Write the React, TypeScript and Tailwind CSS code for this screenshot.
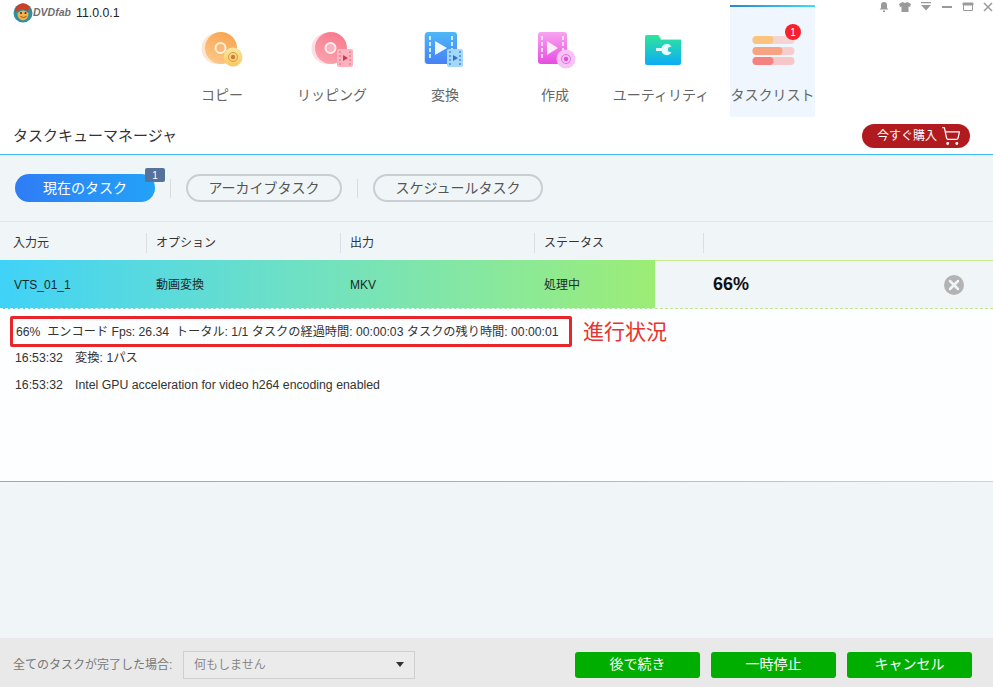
import React from "react";
import { ShoppingCart } from "lucide-react";

const FONT = { fontFamily: '"Liberation Sans", "Noto Sans CJK JP", sans-serif' };

function Film({ x, y, c, dot, tri }: { x: number; y: number; c: string; dot: string; tri: string }) {
  return (
    <g>
      <rect x={x} y={y} width="16" height="18" rx="2" fill={c} />
      {[3, 7, 11, 15].map((d) => (
        <g key={d}>
          <rect x={x + 2} y={y + d - 1} width="2" height="2" fill={dot} />
          <rect x={x + 12} y={y + d - 1} width="2" height="2" fill={dot} />
        </g>
      ))}
      <path d={`M${x + 6} ${y + 6}l5 3-5 3z`} fill={tri} />
    </g>
  );
}

function Copy() {
  return (
    <svg width="60" height="40" viewBox="0 0 60 40">
      <defs>
        <linearGradient id="c1" x1="0.7" y1="0" x2="0.2" y2="1">
          <stop offset="0" stopColor="#f9a54f" />
          <stop offset="1" stopColor="#fbc98a" />
        </linearGradient>
        <linearGradient id="c2" x1="0" y1="0" x2="0" y2="1">
          <stop offset="0" stopColor="#fbe6a0" />
          <stop offset="1" stopColor="#f9c860" />
        </linearGradient>
      </defs>
      <circle cx="25" cy="18.5" r="15.5" fill="#fde6d6" />
      <circle cx="29" cy="18" r="16" fill="url(#c1)" />
      <circle cx="28.500" cy="18" r="5" fill="#f9b878" stroke="#fff0dc" strokeWidth="2" />
      <circle cx="41" cy="27" r="9.5" fill="url(#c2)" />
      <circle cx="41" cy="27" r="4.5" fill="none" stroke="#d9973f" strokeWidth="1" />
      <circle cx="41" cy="27" r="2.2" fill="#cf7c30" />
    </svg>
  );
}

function Rip() {
  return (
    <svg width="60" height="40" viewBox="0 0 60 40">
      <defs>
        <linearGradient id="r1" x1="0.7" y1="0" x2="0.3" y2="1">
          <stop offset="0" stopColor="#f77a8c" />
          <stop offset="1" stopColor="#fba3ae" />
        </linearGradient>
      </defs>
      <circle cx="25" cy="18.5" r="15.5" fill="#fbdfe4" />
      <circle cx="29" cy="18" r="16" fill="url(#r1)" />
      <circle cx="28.500" cy="18" r="5" fill="#fbb0ba" stroke="#ffeef0" strokeWidth="2" />
      <Film x={35} y={19} c="#fbb4bf" dot="#f28b9b" tri="#d8344d" />
    </svg>
  );
}

function Convert() {
  return (
    <svg width="60" height="40" viewBox="0 0 60 40">
      <defs>
        <linearGradient id="v1" x1="0.5" y1="0" x2="0.5" y2="1">
          <stop offset="0" stopColor="#4db8f8" />
          <stop offset="1" stopColor="#4680f5" />
        </linearGradient>
      </defs>
      <rect x="9" y="3" width="31" height="31" rx="3" fill="#cfe3fb" />
      <rect x="10" y="2" width="32" height="32" rx="3" fill="url(#v1)" />
      {[6, 12, 18, 24].map((y) => (
        <g key={y}>
          <rect x="14" y={y} width="2" height="4" fill="#cfeafd" />
          <rect x="36" y={y} width="2" height="4" fill="#cfeafd" />
        </g>
      ))}
      <path d="M20 11l12 7-12 7z" fill="#eef8ff" />
      <Film x={32} y={19} c="#a5d8f8" dot="#5a9fe0" tri="#2b6fd6" />
    </svg>
  );
}

function Create() {
  return (
    <svg width="60" height="40" viewBox="0 0 60 40">
      <defs>
        <linearGradient id="m1" x1="0.5" y1="0" x2="0.5" y2="1">
          <stop offset="0" stopColor="#f8a4f2" />
          <stop offset="1" stopColor="#e84ce0" />
        </linearGradient>
      </defs>
      <rect x="13" y="2" width="29" height="32" rx="3" fill="url(#m1)" />
      {[6, 12, 18, 24].map((y) => (
        <g key={y}>
          <rect x="16" y={y} width="2" height="4" fill="#fde0fb" />
          <rect x="37" y={y} width="2" height="4" fill="#fde0fb" />
        </g>
      ))}
      <path d="M22 11l11 7-11 7z" fill="#fdeefc" />
      <circle cx="41" cy="29" r="9.5" fill="#f7c3f5" />
      <circle cx="41" cy="29" r="4.5" fill="none" stroke="#e86ee2" strokeWidth="1" />
      <circle cx="41" cy="29" r="2.2" fill="#e04fd8" />
    </svg>
  );
}

function Util() {
  return (
    <svg width="60" height="40" viewBox="0 0 60 40">
      <defs>
        <linearGradient id="u1" x1="0.5" y1="0" x2="0.5" y2="1">
          <stop offset="0" stopColor="#2fe59a" />
          <stop offset="1" stopColor="#0cacf7" />
        </linearGradient>
      </defs>
      <path d="M14 7a2 2 0 0 1 2-2h12l3 4h19v5H14z" fill="#a8f0cf" />
      <path d="M14 7a2 2 0 0 1 2-2h11l3 5h20v23a2 2 0 0 1-2 2H16a2 2 0 0 1-2-2z" fill="url(#u1)" />
      <path d="M25 18h5.5a5.5 5.5 0 0 1 10-1.5l-3.5 1.2v3.6l3.5 1.2a5.5 5.5 0 0 1-10-1.5H25z" fill="#e6fbff" />
    </svg>
  );
}

function Tasks() {
  return (
    <svg width="60" height="40" viewBox="0 0 60 40">
      <rect x="9.500" y="6" width="42" height="8" rx="4" fill="#f6d3d3" />
      <rect x="9.500" y="17" width="42" height="8" rx="4" fill="#f6cccc" />
      <rect x="9.500" y="27" width="42" height="8" rx="4" fill="#f6c6c8" />
      <rect x="9.500" y="6" width="21" height="8" rx="4" fill="#fbc47e" />
      <rect x="9.500" y="17" width="30" height="8" rx="4" fill="#f6a283" />
      <rect x="9.500" y="27" width="21" height="8" rx="4" fill="#f58280" />
    </svg>
  );
}

function NavTab({ w, label, icon, active }: { w: string; label: string; icon: React.ReactNode; active?: boolean }) {
  return (
    <div className={`${w} relative flex h-[112px] flex-col items-center ${active ? "bg-[#eff6fd]" : ""}`}>
      {active && <div className="absolute inset-x-0 top-0 h-[2px] bg-gradient-to-r from-[#2f85d0] to-[#40dcf0]" />}
      <div className="mt-[25px] h-[40px]">{icon}</div>
      <div className="mt-[15px] whitespace-nowrap text-[14px] leading-[20px] text-[#666]">{label}</div>
      {active && (
        <div className="absolute left-[55px] top-[19px] flex h-[16px] w-[16px] items-center justify-center rounded-full bg-[#f5222d] text-[10px] text-white">1</div>
      )}
    </div>
  );
}

function WinIcons() {
  return (
    <div className="flex items-start gap-[9px] pt-[2px]">
      <svg width="12" height="10" viewBox="0 0 12 10" fill="#9a9a9a"><path d="M6 0a3 3 0 0 1 3 3v3l1.500 1.500h-9L3 6V3a3 3 0 0 1 3-3zM5 8.500h2V10H5z" /></svg>
      <svg width="12" height="10" viewBox="0 0 12 10" fill="#9a9a9a"><path d="M3.500 0l2.500 1 2.500-1L12 2l-1 3-1.500-.5V10h-7V4.500L1 5 0 2z" /></svg>
      <svg width="12" height="10" viewBox="0 0 12 10" fill="#9a9a9a"><path d="M1 0h10v1.300H1zM1 3h10L6 8.500z" /></svg>
      <svg width="12" height="10" viewBox="0 0 12 10" fill="#9a9a9a"><path d="M1 4h10v2H1z" /></svg>
      <svg width="12" height="10" viewBox="0 0 12 10" fill="none" stroke="#9a9a9a"><path d="M1.500 1.500h9v7h-9z" /><path d="M1 1h10v2H1z" fill="#9a9a9a" /></svg>
      <svg width="10" height="10" viewBox="0 0 10 10" fill="none" stroke="#9a9a9a" strokeWidth="1.500"><path d="M1 1l8 8M9 1L1 9" /></svg>
    </div>
  );
}

function Logo() {
  return (
    <div className="flex items-center pl-[13px] pt-[3px]">
      <svg width="20" height="20" viewBox="0 0 20 20">
        <circle cx="10" cy="10" r="9.500" fill="#2f8f9f" />
        <path d="M2 9a8 8 0 0 1 15-4.500L15 8l-6-2z" fill="#cf3f26" />
        <path d="M4.500 10q5.500-5 11 0q.5 6-5.500 7.500q-6-1.500-5.500-7.500z" fill="#f4b04a" />
        <circle cx="8" cy="10" r="1" fill="#333" />
        <circle cx="12.500" cy="10" r="1" fill="#333" />
        <path d="M7.500 13.500q3 2 6 0" stroke="#a3521b" fill="none" />
      </svg>
      <span className="w-[43px] whitespace-nowrap text-[10.500px] font-bold italic text-[#6f6f6f]">DVDfab</span>
      <span className="text-[12.300px] text-[#222]">11.0.0.1</span>
    </div>
  );
}

function Pill({ w, label }: { w: string; label: string }) {
  return (
    <div className={`${w} flex h-[28px] items-center justify-center rounded-full border-2 border-[#c9ced2] text-[14px] text-[#555]`}>{label}</div>
  );
}

function Sep() {
  return <div className="mx-[15px] h-[19px] w-px bg-[#d8dcdf]" />;
}

function Th({ w, label }: { w: string; label: string }) {
  return (
    <div className={`${w} flex h-[20px] items-center border-r border-[#dcdfe2] pl-[9px] pt-[1px] text-[12px] text-[#333]`}>{label}</div>
  );
}

function Btn({ label }: { label: string }) {
  return (
    <div className="flex h-[26px] w-[125px] items-center justify-center rounded-[3px] bg-[#00ae00] text-[14px] text-white">{label}</div>
  );
}

export default function App() {
  return (
    <div className="flex h-[687px] w-[993px] flex-col overflow-hidden bg-white" style={FONT}>
      <div className="flex h-[117px] items-start">
        <div className="w-[167px]">
          <Logo />
        </div>
        <div className="mt-[5px] flex">
          <NavTab w="w-[110px]" label="コピー" icon={<Copy />} />
          <NavTab w="w-[110px]" label="リッピング" icon={<Rip />} />
          <NavTab w="w-[116px]" label="変換" icon={<Convert />} />
          <NavTab w="w-[104px]" label="作成" icon={<Create />} />
          <NavTab w="w-[108px] mr-[15px]" label="ユーティリティ" icon={<Util />} />
          <NavTab w="w-[85px]" label="タスクリスト" icon={<Tasks />} active />
        </div>
        <div className="flex flex-1 justify-end">
          <WinIcons />
        </div>
      </div>

      <div className="flex h-[38px] items-center justify-between border-b border-[#3fbdf0] pl-[13px] pr-[23px]">
        <div className="pt-[2px] text-[15px] text-[#333]">タスクキューマネージャ</div>
        <div className="flex h-[24px] w-[108px] items-center justify-end gap-[4px] rounded-full bg-[#b11b1f] pr-[9px] text-[12px] text-white">
          今すぐ購入
          <ShoppingCart size={20} strokeWidth={1.5} color="#fff" />
        </div>
      </div>

      <div className="flex flex-1 flex-col bg-[#f0f5f8]">
        <div className="flex h-[67px] items-center border-b border-[#e2e6e9] pl-[15px]">
          <div className="relative flex h-[28px] w-[140px] items-center justify-center rounded-full bg-gradient-to-r from-[#2f7cf5] to-[#22a2f7] text-[14px] text-white">
            現在のタスク
            <div className="absolute -top-[6px] left-[130px] flex h-[14px] w-[20px] items-center justify-center rounded-[2px] bg-[#56729a] text-[10px] text-white">1</div>
          </div>
          <Sep />
          <Pill w="w-[156px]" label="アーカイブタスク" />
          <Sep />
          <Pill w="w-[170px]" label="スケジュールタスク" />
        </div>

        <div className="flex h-[38px] items-center pl-[4px] pt-[3px]">
          <Th w="w-[143px]" label="入力元" />
          <Th w="w-[194px]" label="オプション" />
          <Th w="w-[194px]" label="出力" />
          <Th w="w-[169px]" label="ステータス" />
        </div>

        <div className="flex h-[49px]">
          <div className="flex w-[655px] items-center border-b border-dashed border-b-[#e6f7ea] bg-gradient-to-r from-[#3fd2f7] to-[#9ced74] pt-[1px] text-[12px] text-[#1a2a2a]">
            <div className="w-[156px] pl-[14px]">VTS_01_1</div>
            <div className="w-[194px]">動画変換</div>
            <div className="w-[194px]">MKV</div>
            <div>処理中</div>
          </div>
          <div className="flex flex-1 items-center justify-between border-t border-b border-dashed border-t-[#c9ee8d] border-b-[#c5e68f] [border-top-style:solid] pl-[58px] pr-[29px]">
            <span className="text-[18px] font-bold text-[#111]">66%</span>
            <svg width="20" height="20" viewBox="0 0 20 20">
              <circle cx="10" cy="10" r="10" fill="#b3b3b3" />
              <path d="M6 6l8 8M14 6l-8 8" stroke="#f0f5f8" strokeWidth="2.500" strokeLinecap="round" />
            </svg>
          </div>
        </div>

        <div className="flex h-[172px] flex-col bg-[#fdfeff] pl-[10px] pt-[7px] text-[12.300px] text-[#333]">
          <div className="flex items-center">
            <div className="flex h-[31px] w-[562px] items-center whitespace-nowrap rounded-[2px] border-[3px] border-[#e8262a] pl-[3px] text-[12.200px]">
              66%&nbsp; エンコード Fps: 26.34&nbsp; トータル: 1/1 タスクの経過時間: 00:00:03 タスクの残り時間: 00:00:01
            </div>
            <div className="ml-[11px] text-[21px] text-[#e8342f]">進行状況</div>
          </div>
          <div className="mt-[2px] flex h-[18px] items-center pl-[5px]">
            <span className="w-[60px]">16:53:32</span>
            <span>変換: 1パス</span>
          </div>
          <div className="mt-[9px] flex h-[18px] items-center pl-[5px]">
            <span className="w-[60px]">16:53:32</span>
            <span>Intel GPU acceleration for video h264 encoding enabled</span>
          </div>
        </div>
        <div className="h-px bg-gradient-to-r from-[#2fd0f8] via-[#5fd89a] to-[#c8ee5a]" />

        <div className="flex-1" />
      </div>

      <div className="flex h-[49px] items-center bg-[#e9e9e9] pl-[13px] pr-[21px] pt-[4px]">
        <span className="w-[170px] whitespace-nowrap text-[12px] text-[#777]">全てのタスクが完了した場合:</span>
        <div className="flex h-[28px] w-[232px] items-center justify-between border border-[#cfcfcf] bg-[#ebebeb] px-[10px] text-[12px] text-[#888]">
          <span>何もしません</span>
          <svg width="8" height="5" viewBox="0 0 8 5" fill="#333"><path d="M0 0h8L4 5z" /></svg>
        </div>
        <div className="ml-auto flex gap-[11px]">
          <Btn label="後で続き" />
          <Btn label="一時停止" />
          <Btn label="キャンセル" />
        </div>
      </div>
    </div>
  );
}
